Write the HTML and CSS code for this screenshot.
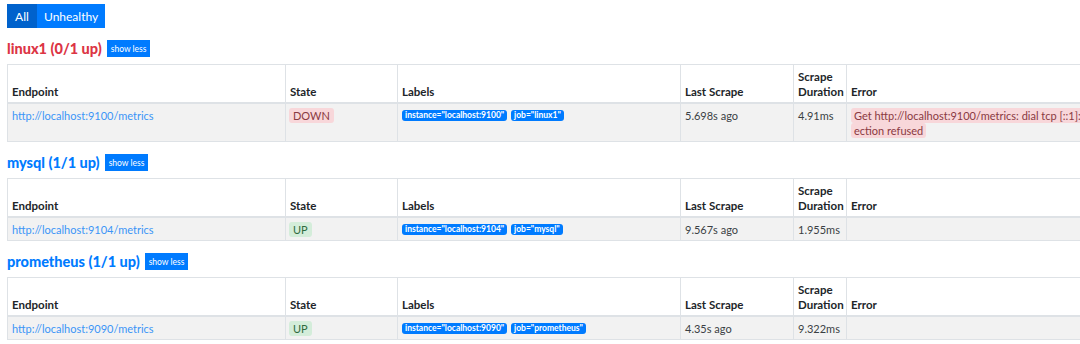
FILE: index.html
```html
<!DOCTYPE html>
<html lang="en">
  <head>
    <meta charset="UTF-8" />
    <title>Targets</title>
    <link rel="stylesheet" href="styles.css">
  </head>
  <body>
    <div class="container">
      <div class="btn-group">
        <button class="btn active">All</button>
        <button class="btn">Unhealthy</button>
      </div>

      <!-- linux1 -->
      <div class="job-head">
        <a class="job-name danger">linux1 (0/1 up)</a>
        <button class="btn-xs">show less</button>
      </div>
      <table class="targets">
        <thead>
          <tr>
            <th class="c-endpoint">Endpoint</th>
            <th class="c-state">State</th>
            <th class="c-labels">Labels</th>
            <th class="c-last">Last Scrape</th>
            <th class="c-dur">Scrape Duration</th>
            <th class="c-error">Error</th>
          </tr>
        </thead>
        <tbody>
          <tr>
            <td><a href="#">http://localhost:9100/metrics</a></td>
            <td><span class="badge down">DOWN</span></td>
            <td>
              <span class="label">instance="localhost:9100"</span>
              <span class="label">job="linux1"</span>
            </td>
            <td>5.698s ago</td>
            <td>4.91ms</td>
            <td><span class="err">Get http://localhost:9100/metrics: dial tcp [::1]:9100: connect: conn<br>ection refused</span></td>
          </tr>
        </tbody>
      </table>

      <!-- mysql -->
      <div class="job-head">
        <a class="job-name">mysql (1/1 up)</a>
        <button class="btn-xs">show less</button>
      </div>
      <table class="targets">
        <thead>
          <tr>
            <th class="c-endpoint">Endpoint</th>
            <th class="c-state">State</th>
            <th class="c-labels">Labels</th>
            <th class="c-last">Last Scrape</th>
            <th class="c-dur">Scrape Duration</th>
            <th class="c-error">Error</th>
          </tr>
        </thead>
        <tbody>
          <tr>
            <td><a href="#">http://localhost:9104/metrics</a></td>
            <td><span class="badge up">UP</span></td>
            <td>
              <span class="label">instance="localhost:9104"</span>
              <span class="label">job="mysql"</span>
            </td>
            <td>9.567s ago</td>
            <td>1.955ms</td>
            <td></td>
          </tr>
        </tbody>
      </table>

      <!-- prometheus -->
      <div class="job-head">
        <a class="job-name">prometheus (1/1 up)</a>
        <button class="btn-xs">show less</button>
      </div>
      <table class="targets">
        <thead>
          <tr>
            <th class="c-endpoint">Endpoint</th>
            <th class="c-state">State</th>
            <th class="c-labels">Labels</th>
            <th class="c-last">Last Scrape</th>
            <th class="c-dur">Scrape Duration</th>
            <th class="c-error">Error</th>
          </tr>
        </thead>
        <tbody>
          <tr>
            <td><a href="#">http://localhost:9090/metrics</a></td>
            <td><span class="badge up">UP</span></td>
            <td>
              <span class="label">instance="localhost:9090"</span>
              <span class="label">job="prometheus"</span>
            </td>
            <td>4.35s ago</td>
            <td>9.322ms</td>
            <td></td>
          </tr>
        </tbody>
      </table>
    </div>
  </body>
</html>
```

FILE: styles.css
```css
html,
body {
  overflow: hidden;
}

body {
  margin: 0;
  padding: 4px 0 0 7px;
  background-color: #fff;
  color: #212529;
  font-family: Lato, "Open Sans", sans-serif;
  font-size: 12px;
  line-height: 15px;
}

.container {
  width: 1400px;
}

.btn-group {
  display: flex;
}

.btn {
  height: 24px;
  padding: 0 7px;
  border: none;
  background-color: #007bff; /* bleu bootstrap */
  color: #fff;
  font-family: inherit;
  font-size: 12px;
}

.btn.active {
  background-color: #0062cc;
  width: 30px;
}

.job-head {
  display: flex;
  align-items: center;
  gap: 5px;
  margin: 12px 0 7px;
}

.job-name {
  color: #007bff;
  font-weight: 900;
  font-size: 14.5px;
}

.job-name.danger {
  color: #dc3545;
}

.btn-xs {
  height: 17px;
  padding: 0 4px;
  border: none;
  background-color: #007bff;
  color: #fff;
  font-family: inherit;
  font-size: 8.5px;
}

.targets {
  border-collapse: collapse;
  table-layout: fixed;
  width: 1300px;
  border: 1px solid #dee2e6;
}

.targets th,
.targets td {
  box-sizing: border-box;
  border: 1px solid #dee2e6;
  padding: 4px 4px 3px;
  text-align: left;
}

.targets th {
  vertical-align: bottom;
  border-bottom-width: 2px;
  font-size: 11.5px;
}

.targets td {
  vertical-align: top;
  background-color: #f2f2f2;
  font-size: 11px;
  color: #3a3f44;
}

.c-endpoint { width: 278px; }
.c-state { width: 112px; }
.c-labels { width: 283px; }
.c-last { width: 113px; }
.c-dur { width: 53px; }

.targets a {
  color: #3b95f7;
  text-decoration: none;
}

.badge {
  display: inline-block;
  padding: 0 4px;
  border-radius: 3px;
  line-height: 15px;
  margin-left: -1px;
}

.down {
  background-color: #f8d7da;
  color: #8a3a42;
}

.up {
  background-color: #d4edda;
  color: #2f6b3e;
}

.label {
  display: inline-block;
  padding: 0 3px;
  margin-right: 1px;
  border-radius: 3px;
  background-color: #007bff;
  color: #fff;
  font-size: 8.5px;
  font-weight: bold;
  line-height: 11px;
  vertical-align: 2px;
}

.err {
  background-color: #f8d7da;
  color: #8a3a42;
  padding: 1px 3px;
  border-radius: 3px;
  white-space: nowrap;
  -webkit-box-decoration-break: clone;
  box-decoration-break: clone;
}
```
